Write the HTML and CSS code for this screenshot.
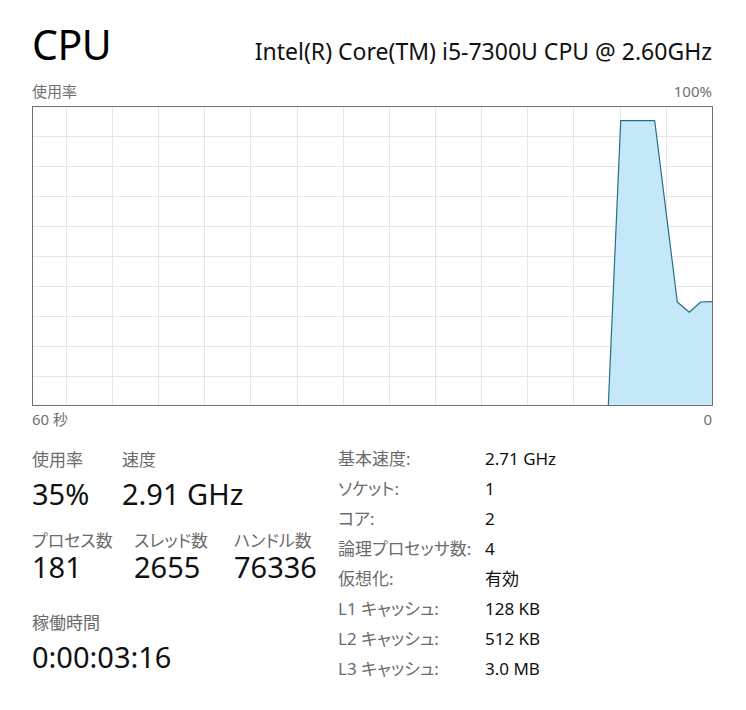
FILE: index.html
```html
<!DOCTYPE html>
<html lang="ja">
<head>
<meta charset="utf-8">
<title>CPU</title>
<link rel="stylesheet" href="styles.css">
</head>
<body>
<div class="page">
  <header class="header">
    <div class="title">CPU</div>
    <div class="model">Intel(R) Core(TM) i5-7300U CPU @ 2.60GHz</div>
  </header>
  <div class="axis-row axis-top">
    <span>使用率</span>
    <span>100%</span>
  </div>
  <svg class="graph" width="681" height="300" viewBox="0 0 681 300">
    <g class="grid-h">
      <line x1="1" y1="30.5" x2="680" y2="30.5"/>
      <line x1="1" y1="60.5" x2="680" y2="60.5"/>
      <line x1="1" y1="90.5" x2="680" y2="90.5"/>
      <line x1="1" y1="120.5" x2="680" y2="120.5"/>
      <line x1="1" y1="150.5" x2="680" y2="150.5"/>
      <line x1="1" y1="180.5" x2="680" y2="180.5"/>
      <line x1="1" y1="210.5" x2="680" y2="210.5"/>
      <line x1="1" y1="240.5" x2="680" y2="240.5"/>
      <line x1="1" y1="270.5" x2="680" y2="270.5"/>
    </g>
    <g class="grid-v">
      <line x1="34.5" y1="1" x2="34.5" y2="299"/>
      <line x1="80.5" y1="1" x2="80.5" y2="299"/>
      <line x1="126.5" y1="1" x2="126.5" y2="299"/>
      <line x1="172.5" y1="1" x2="172.5" y2="299"/>
      <line x1="218.5" y1="1" x2="218.5" y2="299"/>
      <line x1="265.5" y1="1" x2="265.5" y2="299"/>
      <line x1="311.5" y1="1" x2="311.5" y2="299"/>
      <line x1="357.5" y1="1" x2="357.5" y2="299"/>
      <line x1="403.5" y1="1" x2="403.5" y2="299"/>
      <line x1="449.5" y1="1" x2="449.5" y2="299"/>
      <line x1="495.5" y1="1" x2="495.5" y2="299"/>
      <line x1="541.5" y1="1" x2="541.5" y2="299"/>
      <line x1="588.5" y1="1" x2="588.5" y2="299"/>
      <line x1="634.5" y1="1" x2="634.5" y2="299"/>
    </g>
    <polygon class="area" points="576.3,299.5 588.7,14.7 622.7,14.7 645.3,196 657.3,206.3 668.7,196 680.5,195.7 680.5,299.5"/>
    <polyline class="line" points="576.3,299.5 588.7,14.7 622.7,14.7 645.3,196 657.3,206.3 668.7,196 680.5,195.7"/>
    <rect class="frame" x="0.5" y="0.5" width="680" height="299"/>
  </svg>
  <div class="axis-row axis-bottom">
    <span>60 秒</span>
    <span>0</span>
  </div>
  <section class="stats">
    <div class="stats-left">
      <div class="stat-row row-a">
        <div class="stat">
          <div class="label">使用率</div>
          <div class="value">35%</div>
        </div>
        <div class="stat">
          <div class="label">速度</div>
          <div class="value">2.91 GHz</div>
        </div>
      </div>
      <div class="stat-row row-b">
        <div class="stat">
          <div class="label">プロセス数</div>
          <div class="value">181</div>
        </div>
        <div class="stat">
          <div class="label">スレッド数</div>
          <div class="value">2655</div>
        </div>
        <div class="stat">
          <div class="label">ハンドル数</div>
          <div class="value">76336</div>
        </div>
      </div>
      <div class="stat-row row-c">
        <div class="stat">
          <div class="label">稼働時間</div>
          <div class="value">0:00:03:16</div>
        </div>
      </div>
    </div>
    <dl class="specs">
      <dt>基本速度:</dt><dd>2.71 GHz</dd>
      <dt>ソケット:</dt><dd>1</dd>
      <dt>コア:</dt><dd>2</dd>
      <dt>論理プロセッサ数:</dt><dd>4</dd>
      <dt>仮想化:</dt><dd>有効</dd>
      <dt>L1 キャッシュ:</dt><dd>128 KB</dd>
      <dt>L2 キャッシュ:</dt><dd>512 KB</dd>
      <dt>L3 キャッシュ:</dt><dd>3.0 MB</dd>
    </dl>
  </section>
</div>
</body>
</html>
```

FILE: styles.css
```css
html, body {
  margin: 0;
  padding: 0;
  background: #ffffff;
}

body {
  font-family: "Noto Sans", "Noto Sans CJK JP", sans-serif;
  font-feature-settings: "palt";
  color: #1a1a1a;
}

.page {
  padding: 0 34px 0 32px;
}

.header {
  display: flex;
  justify-content: space-between;
  align-items: baseline;
  padding-top: 19px;
  height: 61px;
}

.title {
  font-size: 41px;
  line-height: 50px;
  color: #000;
  letter-spacing: -0.5px;
}

.model {
  font-size: 23px;
  line-height: 30px;
  color: #111;
}

.axis-row {
  display: flex;
  justify-content: space-between;
  font-size: 15px;
  line-height: 22px;
  color: #707070;
}

.axis-top {
  margin-bottom: 4px;
}

.axis-bottom {
  margin-top: 2px;
}

.graph {
  display: block;
}

.grid-h line,
.grid-v line {
  stroke: #e6e6e6;
  stroke-width: 1;
}

.area {
  fill: #c4e8f7;
  stroke: none;
}

.line {
  fill: none;
  stroke: #266f88;
  stroke-width: 1.2;
  stroke-linejoin: round;
}

.frame {
  fill: none;
  stroke: #707070;
  stroke-width: 1;
}

.stats {
  display: grid;
  grid-template-columns: 306px 1fr;
  padding-top: 14px;
}

.stat-row {
  display: grid;
}

.row-a {
  grid-template-columns: 90px auto;
  padding-top: 6px;
}

.row-b {
  grid-template-columns: 102px 100px auto;
  margin-top: 22px;
}

.row-c {
  margin-top: 31px;
}

.label {
  font-size: 17px;
  line-height: 20px;
  color: #6b6b6b;
}

.value {
  font-size: 29px;
  line-height: 30px;
  color: #111;
}

.row-a .value {
  margin-top: 9px;
}

.row-b .value {
  margin-top: 1px;
}

.row-c .value {
  margin-top: 9px;
}

.specs {
  display: grid;
  grid-template-columns: 147px auto;
  margin: 0;
  font-size: 17px;
  line-height: 30px;
}

.specs dt {
  color: #6b6b6b;
}

.specs dd {
  margin: 0;
  color: #111;
}
```
